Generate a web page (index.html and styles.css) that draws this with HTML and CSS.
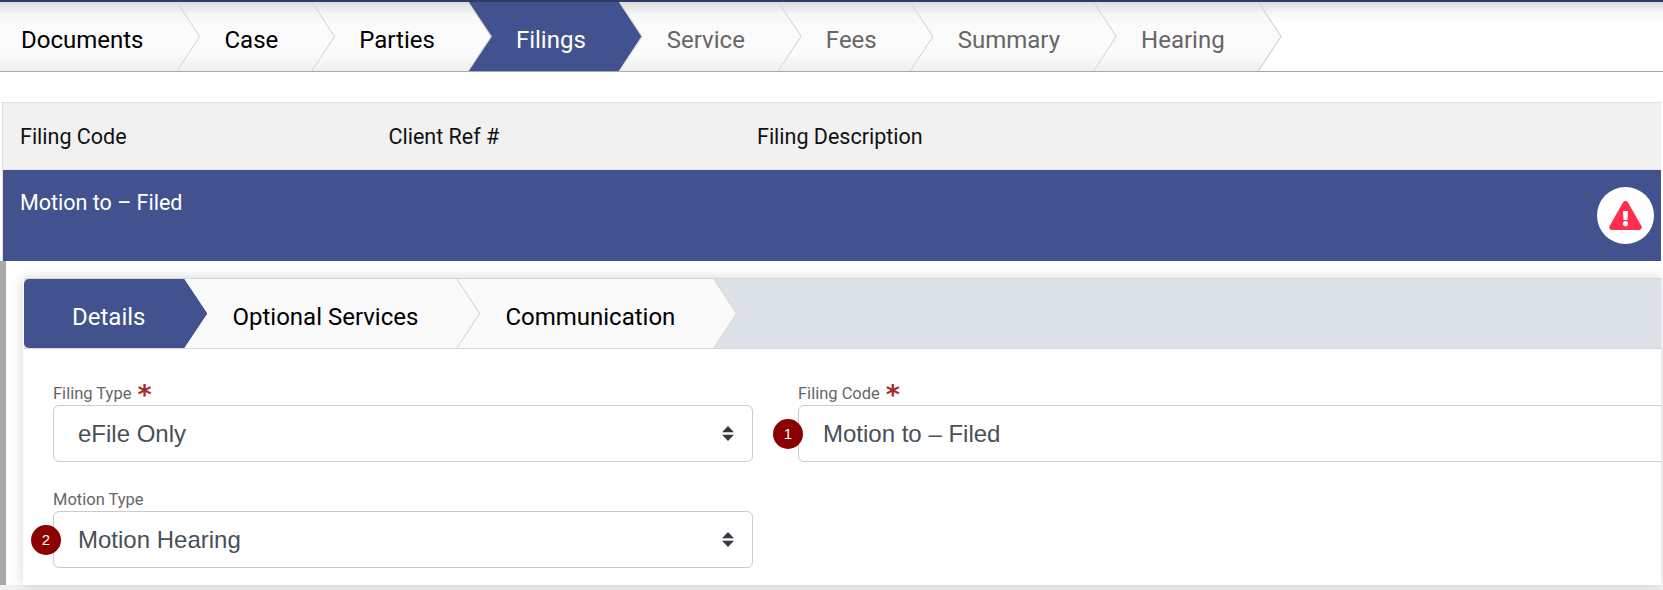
FILE: index.html
```html
<!DOCTYPE html>
<html lang="en">
<head>
<meta charset="utf-8">
<title>Filings</title>
<link rel="stylesheet" href="styles.css">
</head>
<body>
<nav class="steps">
  <a class="step first done">Documents</a>
  <a class="step done">Case</a>
  <a class="step done">Parties</a>
  <a class="step active">Filings</a>
  <a class="step">Service</a>
  <a class="step">Fees</a>
  <a class="step">Summary</a>
  <a class="step">Hearing</a>
</nav>
<section class="filings">
  <div class="filings-head">
    <span>Filing Code</span>
    <span>Client Ref #</span>
    <span>Filing Description</span>
  </div>
  <div class="filings-row">
    <span class="row-title">Motion to – Filed</span>
    <span class="alert">
      <svg class="alert-icon" viewBox="0 0 576 512"><path d="M569.517 440.013C587.975 472.007 564.806 512 527.94 512H48.054c-36.937 0-59.999-40.055-41.577-71.987L246.423 24c18.467-32.009 64.72-31.951 83.154 0l239.94 416.013zM288 354c-25.405 0-46 20.595-46 46s20.595 46 46 46 46-20.595 46-46-20.595-46-46-46zm-43.673-165.346l7.418 136c.347 6.364 5.609 11.346 11.982 11.346h48.546c6.373 0 11.635-4.982 11.982-11.346l7.418-136c.375-6.874-5.098-12.654-11.982-12.654h-63.383c-6.884 0-12.356 5.78-11.981 12.654z"/></svg>
    </span>
  </div>
</section>
<div class="panel">
  <div class="panel-bar"></div>
  <div class="card">
    <div class="tabs">
      <a class="step tab active first">Details</a>
      <a class="step tab">Optional Services</a>
      <a class="step tab">Communication</a>
    </div>
    <div class="form">
      <div class="field">
        <label class="field-label">Filing Type <span class="req">*</span></label>
        <div class="control">
          <span>eFile Only</span>
          <svg class="sort" viewBox="0 0 12 15"><path d="M6 0L12 6.2H0zM0 8.8H12L6 15z"/></svg>
        </div>
      </div>
      <div class="field">
        <label class="field-label">Filing Code <span class="req">*</span></label>
        <div class="control control-open">
          <span class="badge badge-one">1</span>
          <span>Motion to – Filed</span>
        </div>
      </div>
      <div class="field">
        <label class="field-label">Motion Type</label>
        <div class="control">
          <span class="badge badge-two">2</span>
          <span>Motion Hearing</span>
          <svg class="sort" viewBox="0 0 12 15"><path d="M6 0L12 6.2H0zM0 8.8H12L6 15z"/></svg>
        </div>
      </div>
    </div>
  </div>
</div>
<div class="foot"></div>
</body>
</html>
```

FILE: styles.css
```css
* { box-sizing: border-box; }
html, body { margin: 0; padding: 0; height: 590px; overflow: hidden; background: #fff; }
body { font-family: Roboto, "Liberation Sans", sans-serif; color: #000; }

.steps {
  display: flex;
  height: 72px;
  border-top: 2px solid #2f3a66;
  border-bottom: 1px solid #a8a8a8;
  background: linear-gradient(#d9d9d9 0, #f6f6f6 10px, #fff 22px, #fff 100%);
}
.step {
  position: relative;
  display: flex;
  align-items: center;
  height: 100%;
  padding: 7px 57px 0 47px;
  margin-left: -23px;
  font-size: 24px;
  color: #666;
  isolation: isolate;
}
.step.done { color: #000; }
.step.first { margin-left: 0; padding-left: 21px; }
.step::before {
  content: "";
  position: absolute;
  inset: 0;
  z-index: -1;
  background: linear-gradient(#dcdcdc 0, #f6f6f6 12px, #fbfbfb 24px, #fbfbfb 52px, #efefef 100%);
  clip-path: polygon(0 0, calc(100% - 23px) 0, 100% 50%, calc(100% - 23px) 100%, 0 100%, 23px 50%);
}
.step.first::before { clip-path: polygon(0 0, calc(100% - 23px) 0, 100% 50%, calc(100% - 23px) 100%, 0 100%); }
.step::after {
  content: "";
  position: absolute;
  top: 0;
  right: 0;
  width: 24px;
  height: 100%;
  background: #d4d4d4;
  clip-path: polygon(0 0, 1.4px 0, 100% 50%, 1.4px 100%, 0 100%, calc(100% - 1.4px) 50%);
}
.step.active { color: #fff; }
.step.active::before { background: #42528e; }
.step.active::after { background: #e8e8e8; }

.filings {
  margin: 30px 2px 0 2px;
  border-top: 1px solid #dfdfdf;
  border-left: 1px solid #dfdfdf;
}
.filings-head {
  display: grid;
  grid-template-columns: 368.5px 368.5px 1fr;
  align-items: center;
  height: 67px;
  padding-left: 17px;
  background: #f1f1f1;
  font-size: 21.5px;
  color: #111;
  border-bottom: 1px solid #e4e6ec;
}
.filings-row {
  display: flex;
  justify-content: space-between;
  align-items: center;
  height: 91px;
  padding: 0 7px 0 17px;
  background: #42528e;
  color: #fff;
  font-size: 21.5px;
}
.row-title { align-self: flex-start; margin-top: 20px; }
.alert {
  display: flex;
  align-items: center;
  justify-content: center;
  width: 57px;
  height: 57px;
  border-radius: 50%;
  background: #fff;
}
.alert-icon { width: 33px; height: 29px; fill: #ff2d4f; }

.panel {
  display: flex;
  height: 324px;
  margin-right: 2px;
}
.panel-bar { width: 6px; background: #a9a9a9; flex: none; }
.card {
  flex: 1;
  min-width: 0;
  margin: 17px 0 0 17px;
  background: #fff;
  box-shadow: 0 0 12px rgba(0, 0, 0, .16);
  overflow: hidden;
}
.tabs {
  display: flex;
  height: 71px;
  margin-left: 1px;
  background: #dce0e7;
  border-top: 1px solid #d6d6d6;
  border-bottom: 1px solid #d6d6d6;
}
.step.tab { padding: 6px 62px 0 48px; color: #000; font-size: 24px; }
.step.tab.first { padding-left: 48px; }
.step.tab.active { color: #fff; border-radius: 5px 0 0 5px; overflow: hidden; }
.step.tab.active::after { display: none; }
.step.tab::before { background: #fafafa; }
.step.tab.active::before { background: #42528e; }

.form {
  display: grid;
  grid-template-columns: 700px 1fr;
  column-gap: 45px;
  row-gap: 29px;
  padding: 36px 0 0 30px;
  margin-right: -8px;
}
.field-label {
  display: flex;
  gap: 6px;
  height: 20px;
  font-size: 16.5px;
  line-height: 18px;
  color: #666;
  white-space: nowrap;
}
.req {
  height: 20px;
  margin-top: -4px;
  font: bold 27px/27px "DejaVu Sans", sans-serif;
  color: #a52a2a;
}
.control {
  position: relative;
  display: flex;
  align-items: center;
  justify-content: space-between;
  height: 57px;
  padding: 0 18px 0 24px;
  border: 1px solid #ccc;
  border-radius: 6px;
  background: #fff;
  font-family: "Liberation Sans", Arial, sans-serif;
  font-size: 24px;
  color: #495057;
}
.sort { width: 12px; height: 15px; fill: #343a40; }
.badge {
  position: absolute;
  top: 50%;
  width: 30px;
  height: 30px;
  margin-top: -15px;
  display: flex;
  align-items: center;
  justify-content: center;
  border-radius: 50%;
  background: #8b0000;
  color: #fff;
  font-size: 15px;
}
.badge-one { left: -26px; }
.badge-two { left: -23px; }
.foot { height: 5px; background: #f1f1f1; }
```
